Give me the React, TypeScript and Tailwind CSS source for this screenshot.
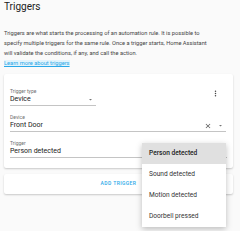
import React from "react";

const font = { fontFamily: "Roboto, 'Liberation Sans', sans-serif" };

function Field({
  label,
  value,
  wide,
  clear,
}: {
  label: string;
  value: string;
  wide?: boolean;
  clear?: boolean;
}) {
  return (
    <div className={"flex flex-col border-b border-[#c4c4c4] " + (wide ? "w-full" : "w-[86px]")}>
      <div className="text-[5px] leading-[6px] text-[#6f6f6f]">{label}</div>
      <div className="flex h-[11px] items-center">
        <span className="flex-1 text-[7px] leading-[9px] text-[#212121]">{value}</span>
        {clear && (
          <svg viewBox="0 0 24 24" className="mr-[5px] h-[8px] w-[8px] text-[#555]">
            <path
              d="M19 6.41L17.59 5 12 10.59 6.41 5 5 6.41 10.59 12 5 17.59 6.41 19 12 13.41 17.59 19 19 17.59 13.41 12z"
              fill="currentColor"
            />
          </svg>
        )}
        {value !== "Person detected" && (
          <svg viewBox="0 0 24 24" className="mr-[2px] h-[7px] w-[7px] text-[#757575]">
            <path d="M7 10l5 5 5-5z" fill="currentColor" />
          </svg>
        )}
      </div>
    </div>
  );
}

export default function App() {
  const options = ["Person detected", "Sound detected", "Motion detected", "Doorbell pressed"];

  return (
    <div className="relative h-[231px] w-[240px] overflow-hidden bg-[#fafafa] px-[4px]" style={font}>
      <h1 className="pt-[1px] text-[10px] leading-[12px] text-[#212121]">Triggers</h1>

      <div className="mt-[15px] whitespace-nowrap text-[5.7px] leading-[10px] text-[#444]">
        <div>Triggers are what starts the processing of an automation rule. It is possible to</div>
        <div>specify multiple triggers for the same rule. Once a trigger starts, Home Assistant</div>
        <div>will validate the conditions, if any, and call the action.</div>
        <div>
          <span className="bg-[#e3f4fc] text-[#2aa8e8] underline">Learn more about triggers</span>
        </div>
      </div>

      {/* trigger card */}
      <div className="mt-[6px] w-[229px] rounded-[2px] bg-white px-[6px] pb-[10px] pt-[14px] shadow-[0_1px_2px_rgba(0,0,0,0.2)]">
        <div className="flex items-start justify-between">
          <Field label="Trigger type" value="Device" />
          <svg viewBox="0 0 24 24" className="mr-[7px] mt-[1px] h-[9px] w-[9px] text-[#444]">
            <path
              d="M12 8a2 2 0 1 0 0-4 2 2 0 0 0 0 4zm0 2a2 2 0 1 0 0 4 2 2 0 0 0 0-4zm0 6a2 2 0 1 0 0 4 2 2 0 0 0 0-4z"
              fill="currentColor"
            />
          </svg>
        </div>
        <div className="mt-[8px] pr-[1px]">
          <Field label="Device" value="Front Door" wide clear />
        </div>
        <div className="mt-[8px]">
          <Field label="Trigger" value="Person detected" wide />
        </div>
      </div>

      {/* add trigger card */}
      <div className="mt-[6px] flex h-[20px] w-[229px] items-center justify-center rounded-[2px] bg-white shadow-[0_1px_2px_rgba(0,0,0,0.2)]">
        <span className="text-[5px] font-medium tracking-[0.4px] text-[#2aa8e8]">ADD TRIGGER</span>
      </div>

      {/* dropdown menu */}
      <div className="absolute left-[142px] top-[143px] w-[84px] bg-white shadow-[0_2px_6px_rgba(0,0,0,0.25)]">
        {options.map((o, i) => (
          <div
            key={o}
            className={
              "flex h-[21px] items-center pl-[7px] text-[6.6px] " +
              (i === 0 ? "bg-[#e0e0e0] font-medium text-[#212121]" : "text-[#333]")
            }
          >
            {o}
          </div>
        ))}
      </div>
    </div>
  );
}
